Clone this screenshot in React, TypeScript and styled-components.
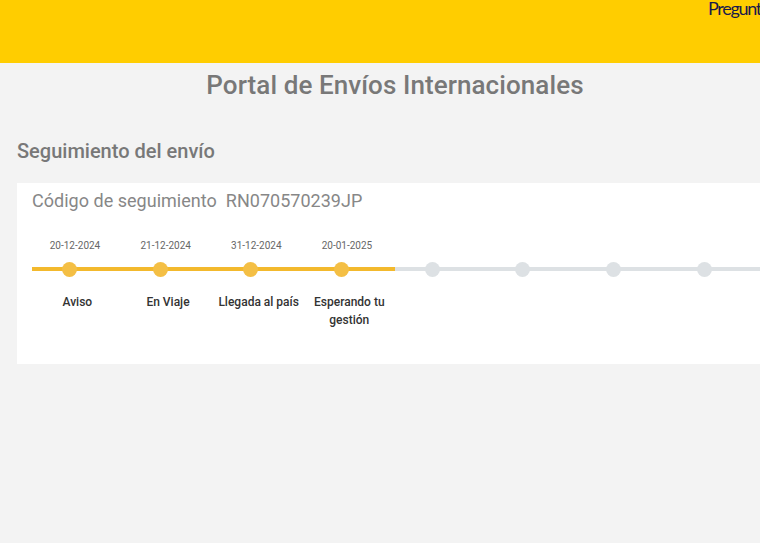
import React from 'react'
import styled, { createGlobalStyle } from "styled-components";

const steps = [
    { date: "20-12-2024", label: "Aviso", done: true },
    { date: "21-12-2024", label: "En Viaje", done: true },
    { date: "31-12-2024", label: "Llegada al país", done: true },
    { date: "20-01-2025", label: "Esperando tu gestión", done: true },
    { date: "", label: "", done: false },
    { date: "", label: "", done: false },
    { date: "", label: "", done: false },
    { date: "", label: "", done: false },
    { date: "", label: "", done: false },
];

export default function App() {
    return (
        <Page>
            <GlobalStyle />
            <Header>
                <HeaderLink>Preguntas frecuentes</HeaderLink>
            </Header>
            <Title>Portal de Envíos Internacionales</Title>
            <Section>
                <SectionTitle>Seguimiento del envío</SectionTitle>
                <Card>
                    <Code>Código de seguimiento&nbsp; RN070570239JP</Code>
                    <Stepper>
                        {steps.map((step, i) => (
                            <Step key={i}>
                                <StepDate>{step.date}</StepDate>
                                <Track $done={step.done}>
                                    <Dot $done={step.done} />
                                </Track>
                                <StepLabel>{step.label}</StepLabel>
                            </Step>
                        ))}
                    </Stepper>
                </Card>
            </Section>
        </Page>
    );
}

const GlobalStyle = createGlobalStyle`
    html, body {
        margin:0;
        padding:0;
        height:100%;
        overflow:hidden;
        background:#f3f3f3;
    }
    #root {
        height:100%;
    }
`;

const Page = styled.div`
    width:760px;
    height:543px;
    overflow:hidden;
    background:#f3f3f3;
    font-family:Roboto, "Liberation Sans", sans-serif;
`;

const Header = styled.header`
    height:63px;
    background:#ffcd00;
    padding-left:708px;
    box-sizing:border-box;
    overflow:hidden;
`;

const HeaderLink = styled.a`
    display:block;
    width:300px;
    font-family:Lato, sans-serif;
    font-size:18px;
    line-height:17px;
    letter-spacing:-1.3px;
    color:#1a1a4b;
`;

const Title = styled.h1`
    margin:0;
    padding-top:7px;
    font-size:26px;
    line-height:31px;
    font-weight:500;
    letter-spacing:0.08px;
    color:#787878;
    text-align:center;
    width:790px;
`;

const Section = styled.section`
    padding:38px 0 0 17px;
`;

const SectionTitle = styled.h2`
    margin:0;
    font-size:20px;
    line-height:24px;
    font-weight:500;
    color:#787878;
`;

const Card = styled.div`
    margin-top:20px;
    width:900px;
    height:181px;
    background:#fff;
    padding:6px 0 0 15px;
    box-sizing:border-box;
`;

const Code = styled.div`
    font-size:18px;
    line-height:24px;
    letter-spacing:0.02px;
    color:#878787;
`;

const Stepper = styled.div`
    display:flex;
    margin-top:25px;
`;

const Step = styled.div`
    width:90.67px;
    flex:none;
    display:flex;
    flex-direction:column;
`;

const StepDate = styled.div`
    width:86px;
    height:16px;
    font-size:10px;
    line-height:16px;
    color:#666;
    text-align:center;
`;

const Track = styled.div<{ $done: boolean }>`
    height:16px;
    margin:7px -1px 0 0;
    display:flex;
    align-items:center;
    padding-left:30px;
    background:linear-gradient(${(p) => (p.$done ? "#f3b92d" : "#dde1e4")}, ${(p) => (p.$done ? "#f3b92d" : "#dde1e4")}) center / 100% 4px no-repeat;
`;

const Dot = styled.span<{ $done: boolean }>`
    width:15px;
    height:15px;
    border-radius:50%;
    background:${(p) => (p.$done ? "#f4bf45" : "#dde1e4")};
`;

const StepLabel = styled.div`
    margin-top:16px;
    padding:0 4px;
    font-size:12px;
    line-height:18px;
    font-weight:500;
    color:#333;
    text-align:center;
`;
